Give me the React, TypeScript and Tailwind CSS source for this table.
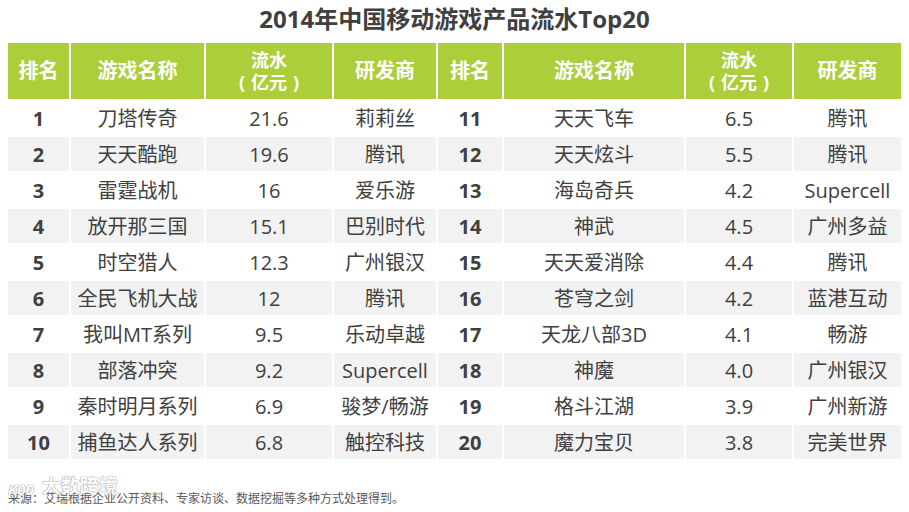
import React from "react";

const left = [
  ["1", "刀塔传奇", "21.6", "莉莉丝"],
  ["2", "天天酷跑", "19.6", "腾讯"],
  ["3", "雷霆战机", "16", "爱乐游"],
  ["4", "放开那三国", "15.1", "巴别时代"],
  ["5", "时空猎人", "12.3", "广州银汉"],
  ["6", "全民飞机大战", "12", "腾讯"],
  ["7", "我叫MT系列", "9.5", "乐动卓越"],
  ["8", "部落冲突", "9.2", "Supercell"],
  ["9", "秦时明月系列", "6.9", "骏梦/畅游"],
  ["10", "捕鱼达人系列", "6.8", "触控科技"],
];

const right = [
  ["11", "天天飞车", "6.5", "腾讯"],
  ["12", "天天炫斗", "5.5", "腾讯"],
  ["13", "海岛奇兵", "4.2", "Supercell"],
  ["14", "神武", "4.5", "广州多益"],
  ["15", "天天爱消除", "4.4", "腾讯"],
  ["16", "苍穹之剑", "4.2", "蓝港互动"],
  ["17", "天龙八部3D", "4.1", "畅游"],
  ["18", "神魔", "4.0", "广州银汉"],
  ["19", "格斗江湖", "3.9", "广州新游"],
  ["20", "魔力宝贝", "3.8", "完美世界"],
];

const font = { fontFamily: '"Open Sans", "Noto Sans CJK SC", sans-serif' };

function HeaderCells() {
  return (
    <>
      <div className="bg-[#acce3a] flex items-center justify-center text-white font-bold text-[20px]">排名</div>
      <div className="bg-[#acce3a] flex items-center justify-center text-white font-bold text-[20px]">游戏名称</div>
      <div className="bg-[#acce3a] flex flex-col items-center justify-center gap-[1px] text-white font-bold text-[18px]">
        <span className="leading-[21px]">流水</span>
        <span className="flex gap-[6px] leading-[21px]">
          <span>(</span>
          <span>亿元</span>
          <span>)</span>
        </span>
      </div>
      <div className="bg-[#acce3a] flex items-center justify-center text-white font-bold text-[20px]">研发商</div>
    </>
  );
}

function Cells({ row, shade }: { row: string[]; shade: boolean }) {
  const bg = shade ? "bg-[#f2f2f2]" : "bg-white";
  return (
    <>
      <div className={`${bg} flex items-center justify-center pt-[2px] font-bold text-[20px]`}>{row[0]}</div>
      <div className={`${bg} flex items-center justify-center pt-[2px] text-[20px]`}>{row[1]}</div>
      <div className={`${bg} flex items-center justify-center pt-[2px] text-[20px]`}>{row[2]}</div>
      <div className={`${bg} flex items-center justify-center pt-[2px] text-[20px]`}>{row[3]}</div>
    </>
  );
}

export default function App() {
  return (
    <div className="w-[909px] h-[512px] bg-white text-[#404040] relative overflow-hidden" style={font}>
      <div className="h-[43px] flex items-center justify-center pb-[6px]">
        <h1 className="text-[24px] font-bold text-[#404040]">2014年中国移动游戏产品流水Top20</h1>
      </div>
      <div className="ml-[8px] w-[893px] grid grid-cols-[61px_133px_126px_102px_64px_180px_106px_107px] grid-rows-[56px_repeat(10,34px)] gap-[2px]">
        <HeaderCells />
        <HeaderCells />
        {left.map((r, i) => (
          <React.Fragment key={i}>
            <Cells row={r} shade={i % 2 === 1} />
            <Cells row={right[i]} shade={i % 2 === 1} />
          </React.Fragment>
        ))}
      </div>
      <div className="mt-[31px] ml-[8px] text-[12px] text-[#595959]">
        来源：艾瑞根据企业公开资料、专家访谈、数据挖掘等多种方式处理得到。
      </div>
      <div className="absolute left-[8px] top-[472px] flex items-end gap-[8px] text-white font-bold [text-shadow:0_0_1px_#888,0_0_1px_#888]">
        <span className="text-[15px] italic">K00</span>
        <span className="text-[19px]">大数跨境</span>
      </div>
    </div>
  );
}
